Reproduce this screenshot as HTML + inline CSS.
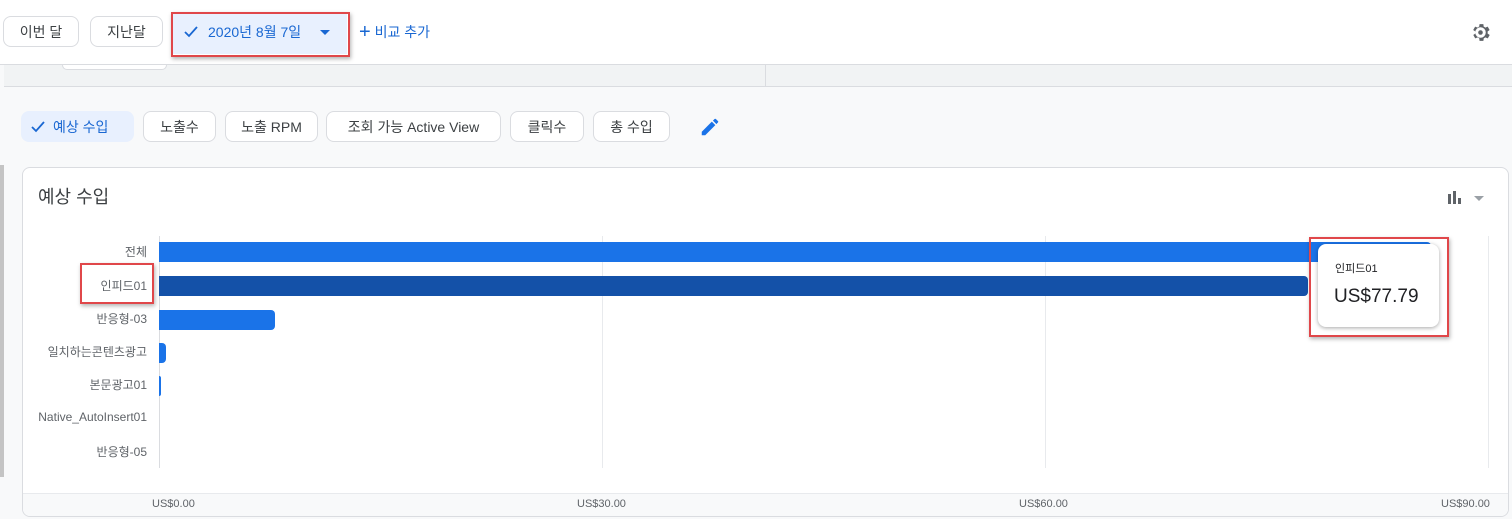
<!DOCTYPE html>
<html><head><meta charset="utf-8"><style>
*{box-sizing:border-box;margin:0;padding:0}
body{width:1512px;height:519px;overflow:hidden;background:#f8f9fa;font-family:"Liberation Sans","Noto Sans CJK KR",sans-serif;position:relative;color:#3c4043}
.a{position:absolute}
.chip{position:absolute;height:31px;border:1px solid #dadce0;border-radius:8px;background:#fff;font-size:14px;color:#3c4043;display:flex;align-items:center;justify-content:center}
.lbl{position:absolute;right:1365px;font-size:12px;color:#5f6368;white-space:nowrap}
.bar{position:absolute;left:159px;height:20px;background:#1a73e8;border-radius:0 4px 4px 0}
.grid{position:absolute;top:236px;width:1px;height:232px;background:#e8eaed}
.ax{position:absolute;top:498px;font-size:11px;color:#5f6368}
.red{position:absolute;border:2px solid #e0474a;box-shadow:1px 2px 4px rgba(0,0,0,.3)}
</style></head><body>
<div class="a" style="left:0;top:0;width:1512px;height:65px;background:#fff;border-bottom:1px solid #dadce0"></div>
<div class="chip" style="left:3px;top:16px;width:76px">이번 달</div>
<div class="chip" style="left:90px;top:16px;width:73px">지난달</div>
<div class="a" style="left:173px;top:14px;width:174px;height:40px;background:#e8f0fe"></div>
<svg class="a" style="left:183px;top:25px" width="16" height="14" viewBox="0 0 16 14"><path d="M2 7l4 4 8-9" fill="none" stroke="#1967d2" stroke-width="1.8"/></svg>
<div class="a" style="left:208px;top:22px;font-size:14px;color:#1967d2">2020년 8월 7일</div>
<div class="a" style="left:320px;top:30px;width:0;height:0;border-left:5px solid transparent;border-right:5px solid transparent;border-top:5px solid #1967d2"></div>
<div class="red" style="left:171px;top:12px;width:179px;height:45px"></div>
<div class="a" style="left:359px;top:20px;font-size:14px;color:#1967d2"><span style="font-size:20px;position:relative;top:1px">+</span> 비교 추가</div>
<svg class="a" style="left:1469px;top:21px" width="23" height="23" viewBox="0 0 24 24"><path fill="#5f6368" d="M19.4 13a7.5 7.5 0 000-2l2.1-1.6-2-3.5-2.5 1a7 7 0 00-1.7-1L15 3.2h-4l-.4 2.7a7 7 0 00-1.7 1l-2.5-1-2 3.5L6.6 11a7.5 7.5 0 000 2l-2.1 1.6 2 3.5 2.5-1a7 7 0 001.7 1l.3 2.7h4l.4-2.7a7 7 0 001.7-1l2.5 1 2-3.5zM12 17.5A5.5 5.5 0 1112 6.5a5.5 5.5 0 010 11z"/><circle cx="12" cy="12" r="2.4" fill="#5f6368"/></svg>
<div class="a" style="left:4px;top:65px;width:1508px;height:22px;background:#f1f3f4;border-bottom:1px solid #dadce0"></div>
<div class="a" style="left:62px;top:65px;width:105px;height:5px;background:#fff;border:1px solid #dadce0;border-top:none;border-radius:0 0 6px 6px"></div>
<div class="a" style="left:765px;top:65px;width:1px;height:22px;background:#dadce0"></div>
<div class="a" style="left:0;top:165px;width:4px;height:312px;background:#c4c4c4"></div>
<div class="chip" style="left:21px;top:111px;width:113px;border:none;background:#e8f0fe;color:#1967d2;justify-content:flex-start;padding-left:32px">예상 수입</div>
<svg class="a" style="left:30px;top:120px" width="16" height="14" viewBox="0 0 16 14"><path d="M2 7l4 4 8-9" fill="none" stroke="#1967d2" stroke-width="1.8"/></svg>
<div class="chip" style="left:143px;top:111px;width:73px">노출수</div>
<div class="chip" style="left:225px;top:111px;width:93px">노출 RPM</div>
<div class="chip" style="left:326px;top:111px;width:175px">조회 가능 Active View</div>
<div class="chip" style="left:510px;top:111px;width:74px">클릭수</div>
<div class="chip" style="left:593px;top:111px;width:77px">총 수입</div>
<svg class="a" style="left:699px;top:116px" width="22" height="22" viewBox="0 0 24 24"><path fill="#1a73e8" d="M3 17.2V21h3.8l11-11-3.8-3.8zM20.7 7a1 1 0 000-1.4l-2.3-2.3a1 1 0 00-1.4 0l-1.8 1.8 3.8 3.8z"/></svg>
<div class="a" style="left:22px;top:167px;width:1487px;height:350px;background:#fff;border:1px solid #dadce0;border-radius:8px;overflow:hidden">
<div class="a" style="left:0;top:325px;width:100%;height:25px;background:#f8f9fa;border-top:1px solid #e8eaed"></div>
</div>
<div class="a" style="left:38px;top:183px;font-size:18px;color:#3c4043">예상 수입</div>
<svg class="a" style="left:1447px;top:191px" width="14" height="14" viewBox="0 0 14 14"><rect x="1" y="3" width="3" height="10" fill="#5f6368"/><rect x="6" y="0" width="3" height="13" fill="#5f6368"/><rect x="11" y="7" width="3" height="6" fill="#5f6368"/></svg>
<div class="a" style="left:1474px;top:196px;width:0;height:0;border-left:5px solid transparent;border-right:5px solid transparent;border-top:5px solid #9aa0a6"></div>
<div class="grid" style="left:159px;background:#dadce0"></div>
<div class="grid" style="left:602px"></div>
<div class="grid" style="left:1045px"></div>
<div class="grid" style="left:1488px"></div>
<div class="lbl" style="top:243px">전체</div>
<div class="lbl" style="top:277px">인피드01</div>
<div class="lbl" style="top:310px">반응형-03</div>
<div class="lbl" style="top:343px">일치하는콘텐츠광고</div>
<div class="lbl" style="top:376px">본문광고01</div>
<div class="lbl" style="top:410px">Native_AutoInsert01</div>
<div class="lbl" style="top:443px">반응형-05</div>
<div class="bar" style="top:242px;width:1272px"></div>
<div class="bar" style="top:276px;width:1149px;background:#1451a8"></div>
<div class="bar" style="top:310px;width:116px"></div>
<div class="bar" style="top:343px;width:7px"></div>
<div class="bar" style="top:376px;width:2px"></div>
<div class="ax" style="left:152px">US$0.00</div>
<div class="ax" style="left:577px">US$30.00</div>
<div class="ax" style="left:1019px">US$60.00</div>
<div class="ax" style="left:1441px">US$90.00</div>
<div class="red" style="left:80px;top:263px;width:74px;height:41px"></div>
<div class="a" style="left:1318px;top:244px;width:121px;height:83px;background:#fff;border-radius:8px;box-shadow:0 1px 4px rgba(0,0,0,.35)"></div>
<div class="a" style="left:1335px;top:260px;font-size:11px;color:#202124">인피드01</div>
<div class="a" style="left:1334px;top:286px;font-size:19px;color:#202124">US$77.79</div>
<div class="red" style="left:1309px;top:237px;width:140px;height:100px"></div>
</body></html>
